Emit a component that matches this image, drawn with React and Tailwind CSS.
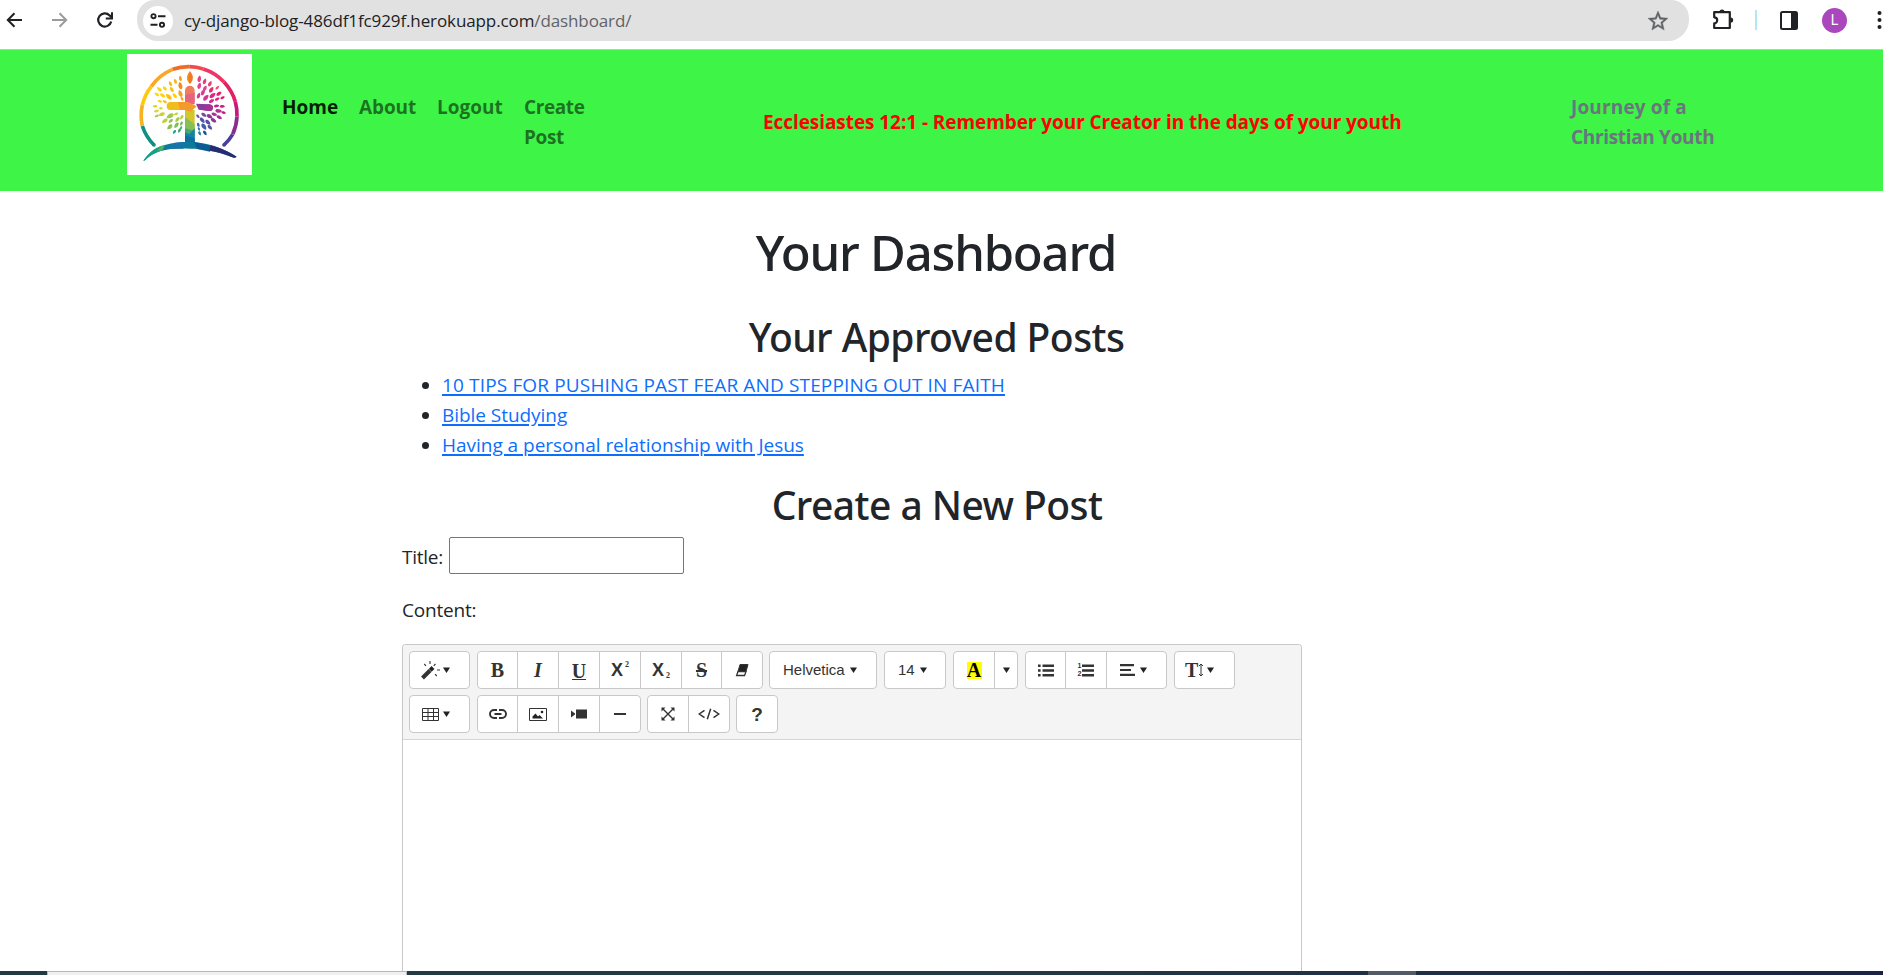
const RING = [
  ['M102 300 A145 145 0 0 1 67 243', '#0f8f86'],
  ['M67 243 A145 145 0 0 1 67 180', '#f6b424'],
  ['M67 180 A145 145 0 0 1 94 124', '#fdc90f'],
  ['M94 124 A145 145 0 0 1 158 73', '#f9a825'],
  ['M158 73 A145 145 0 0 1 208 65', '#f26a24'],
  ['M208 65 A145 145 0 0 1 250 72', '#ee4b4a'],
  ['M250 72 A145 145 0 0 1 312 111', '#ee3565'],
  ['M312 111 A145 145 0 0 1 346 170', '#e22062'],
  ['M346 170 A145 145 0 0 1 351 215', '#c9187f'],
  ['M351 215 A145 145 0 0 1 338 268', '#8a2d8f'],
  ['M338 268 A145 145 0 0 1 312 300', '#4b3f9d'],
];

// [x, y, rotation, length, color]
const LEAVES = [
  [181, 100, -10, 8, '#f59a1f'], [166, 109, -20, 8, '#f9b31c'], [151, 116, -28, 8, '#f8b81b'],
  [181, 122, -12, 11, '#f58a1f'], [155, 133, -30, 9, '#f9c21a'], [134, 130, -40, 8, '#fbd00e'],
  [118, 133, -48, 9, '#fdd60a'], [164, 152, -38, 9, '#ffd200'], [181, 145, -20, 11, '#f7a41c'],
  [186, 161, -25, 7, '#f6a821'], [146, 155, -45, 11, '#fbbf15'], [127, 151, -55, 9, '#fbcf12'],
  [110, 148, -60, 8, '#fdd80a'], [134, 170, -65, 7, '#f9c01a'], [119, 169, -72, 7, '#f7d713'],
  [105, 184, -85, 7, '#d9d72a'], [122, 190, -90, 6, '#c9d22f'], [109, 198, -105, 8, '#e0d531'],
  [125, 208, -110, 10, '#d3cf31'], [110, 213, -115, 7, '#a9c93c'], [150, 213, -120, 12, '#9ecb4a'],
  [168, 207, -115, 7, '#c7d136'], [134, 228, -125, 10, '#bfd036'], [172, 224, -140, 9, '#a5c940'],
  [152, 228, -130, 8, '#8fc449'], [185, 217, -150, 8, '#c2d03a'], [149, 246, -135, 10, '#8cc152'],
  [169, 241, -145, 10, '#7fbf58'], [184, 236, -155, 7, '#74bb60'], [163, 261, -145, 7, '#1fa07c'],
  [178, 257, -155, 7, '#2ba574'], [183, 249, -155, 6, '#45ad68'],
  [238, 101, 10, 10, '#e83e83'], [254, 109, 20, 9, '#ec3a78'], [270, 116, 28, 9, '#ef3e73'],
  [238, 122, 14, 10, '#e2418b'], [255, 130, 25, 9, '#e93d85'], [274, 134, 35, 10, '#eb2c6e'],
  [292, 128, 42, 7, '#f04c6e'], [249, 142, 25, 10, '#d93c92'], [236, 152, 20, 9, '#d13a95'],
  [258, 158, 40, 11, '#d8338f'], [278, 151, 50, 11, '#e12583'], [297, 146, 55, 9, '#e71f6a'],
  [275, 168, 60, 9, '#e0218a'], [292, 162, 62, 8, '#e0218a'], [308, 158, 65, 7, '#df1b66'],
  [290, 183, 80, 8, '#c51d8a'], [307, 184, 88, 8, '#d01f84'], [296, 198, 100, 10, '#b92d90'],
  [311, 203, 105, 7, '#c11b80'], [283, 208, 110, 9, '#a03293'], [298, 217, 120, 9, '#a82a8e'],
  [234, 214, 140, 7, '#7c51a0'], [252, 210, 125, 9, '#7a4aa0'], [269, 214, 120, 10, '#8e3997'],
  [281, 226, 125, 10, '#8b3796'], [247, 226, 140, 10, '#4c56a7'], [264, 232, 135, 10, '#6048a0'],
  [235, 240, 155, 7, '#3a69b3'], [252, 245, 145, 11, '#3c60ac'], [270, 247, 135, 9, '#4d55a5'],
  [237, 252, 155, 6, '#2f6cb3'], [239, 265, 155, 7, '#1b83a5'], [255, 264, 145, 8, '#1e4f9e'],
];

function Logo() {
  return (
    <svg className="h-[121px] w-[125px] bg-white" viewBox="21 27 375 363" fill="none">
      {RING.map(([d, c]) => (
        <path key={d} d={d} stroke={c} strokeWidth="11" />
      ))}
      <circle cx="102" cy="300" r="5.5" fill="#0f8f7d" />
      <circle cx="312" cy="300" r="5.5" fill="#4a3f98" />
      {LEAVES.map(([x, y, a, l, c]) => (
        <path
          key={x + '-' + y}
          d={`M0 ${-l} C${l * 0.8} ${-l * 0.3} ${l * 0.6} ${l * 0.9} 0 ${l} C${-l * 0.6} ${l * 0.9} ${-l * 0.8} ${-l * 0.3} 0 ${-l}Z`}
          transform={`translate(${x} ${y}) rotate(${a})`}
          fill={c}
        />
      ))}
      <path d="M210 78 C222 94 221 104 210 117 C199 104 198 94 210 78Z" fill="#ee7a22" />
      <path d="M210 78 C204 94 205 104 210 117 C199 104 198 94 210 78Z" fill="#f6961e" />
      <path d="M195 172 V137 A14.5 14.5 0 0 1 224 137 V172Z" fill="#ef7d5c" />
      <path d="M195 150 L224 143 V178 H195Z" fill="#e6647d" />
      <path d="M195 195 H224 V262 H195Z" fill="#d3c62c" />
      <path d="M195 216 L224 238 V262 H195Z" fill="#86bf58" />
      <path d="M195 250 L224 258 V300 H195Z" fill="#43a872" />
      <path d="M195 262 L208 268 L224 250 V300 H195Z" fill="#1482a2" />
      <path d="M195 272 L224 280 V300 H195Z" fill="#0d6ea3" />
      <path d="M180 171 H151 Q140 172 140 183 Q140 195 151 195 H180Z" fill="#f1bd1d" />
      <path d="M174 171 H205 L230 184 L212 200 L195 195 H180Z" fill="#f49a2c" />
      <path d="M228 176 L268 178 Q279 180 279 188 Q278 198 268 198 L236 194Z" fill="#8c3a9b" />
      <path d="M262 178 Q279 178 279 188 Q278 198 268 198 L250 196Z" fill="#a3358f" />
      <path d="M70 348 C100 302 150 290 209 291 C265 292 305 308 350 335 C345 340 340 338 335 336 C290 318 250 311 209 311 C150 308 105 315 75 346Z" fill="#0d7a9c" />
      <path d="M70 348 C85 325 100 312 122 303 L128 316 C105 322 90 332 75 346Z" fill="#16a085" />
      <path d="M120 304 L135 299 L128 316 L112 321Z" fill="#4caf6a" />
      <path d="M160 294 L195 291 L190 311 L150 311Z" fill="#1874a8" />
      <path d="M222 291 L275 302 L270 320 L232 312Z" fill="#0b5c93" />
      <path d="M272 301 C305 310 325 320 350 335 C345 340 340 338 335 336 C310 326 290 320 268 317Z" fill="#2a2a72" />
    </svg>
  );
}

function Caret() {
  return (
    <svg className="h-[6px] w-[7px] shrink-0" viewBox="0 0 7 6">
      <path d="M0 0.5h7L3.5 6z" fill="#222" />
    </svg>
  );
}

function Icon({ w = 18, h = 18, children }) {
  return (
    <svg width={w} height={h} viewBox={`0 0 ${w} ${h}`} className="shrink-0" fill="none" stroke="#333" strokeWidth="1.6">
      {children}
    </svg>
  );
}

function Group({ children }) {
  return (
    <div className="flex h-[38px] divide-x divide-[#c8c8c8] rounded-[4px] border border-[#c8c8c8] bg-white text-[#333]">
      {children}
    </div>
  );
}

function Btn({ className = 'w-[41px] justify-center', children }) {
  return <button className={'flex items-center ' + className}>{children}</button>;
}

const NARROW = 'w-[40px] justify-center';
const SERIF = "font-['Liberation_Serif',serif] text-[20px] leading-none";

function EditorToolbar() {
  return (
    <div className="h-[95px] border-b border-[#d5d5d5] bg-[#f4f4f4] pl-[6px] pt-[6px] font-['Liberation_Sans',sans-serif]">
      <div className="flex gap-[7px]">
        <Group>
          <Btn className="w-[59px] gap-[2px] pl-[11px]">
            <Icon w={20} h={20}>
              <path d="M1.5 18 L9 10.5" strokeWidth="4" />
              <path d="M9.2 10.3 L12 7.5" strokeWidth="4" stroke="#222" />
              <path d="M3.2 4l1.8 1.8M9 1v3M14.5 4l-1.8 1.8M16 10h3M14 14.2l1.8 1.8" strokeWidth="1.1" />
            </Icon>
            <Caret />
          </Btn>
        </Group>
        <Group>
          <Btn className={NARROW}><span className={SERIF + ' font-bold'}>B</span></Btn>
          <Btn><span className={SERIF + ' font-bold italic'}>I</span></Btn>
          <Btn>
            <span className={SERIF + ' h-[19px] border-b-[1.5px] border-[#333] text-[19px] font-bold'}>U</span>
          </Btn>
          <Btn>
            <span className="text-[18px] font-bold leading-none">X</span>
            <span className="-mt-[11px] ml-[2px] font-['Liberation_Serif',serif] text-[8px] font-bold leading-none">2</span>
          </Btn>
          <Btn>
            <span className="text-[18px] font-bold leading-none">X</span>
            <span className="-mb-[11px] ml-[2px] font-['Liberation_Serif',serif] text-[8px] font-bold leading-none">2</span>
          </Btn>
          <Btn className={NARROW}>
            <span className={SERIF + ' font-bold line-through decoration-2'}>S</span>
          </Btn>
          <Btn className={NARROW}>
            <Icon w={14} h={14}>
              <path d="M5 1.5h8L11 8.5H3z" fill="#222" strokeWidth="1" />
              <path d="M3 8.5h8L9.6 12.5H1.6z" fill="#fff" strokeWidth="1.3" />
            </Icon>
          </Btn>
        </Group>
        <div className="-ml-px">
          <Group>
            <Btn className="w-[106px] gap-[5px] pl-[13px] text-[15px]">
              <span>Helvetica</span>
              <Caret />
            </Btn>
          </Group>
        </div>
        <Group>
          <Btn className="w-[60px] gap-[5px] pl-[13px] text-[15px]">
            <span>14</span>
            <Caret />
          </Btn>
        </Group>
        <Group>
          <Btn>
            <span className={SERIF + ' flex h-[17px] w-[15px] items-center justify-center bg-[#ffff00] font-bold text-black'}>A</span>
          </Btn>
          <Btn className="w-[22px] justify-center"><Caret /></Btn>
        </Group>
        <Group>
          <Btn className={NARROW}>
            <Icon w={16} h={13}>
              <path d="M4.5 1.7h11.5M4.5 6.5h11.5M4.5 11.3h11.5" strokeWidth="2.4" />
              <path d="M0 1.7h2.6M0 6.5h2.6M0 11.3h2.6" strokeWidth="2.4" />
            </Icon>
          </Btn>
          <Btn>
            <span className="mr-[1px] flex flex-col text-[7px] font-bold leading-[8px]">
              <span>1</span>
              <span>2</span>
            </span>
            <Icon w={12} h={13}>
              <path d="M0 1.7h12M0 6.5h12M0 11.3h12" strokeWidth="2.4" />
            </Icon>
          </Btn>
          <Btn className="w-[59px] gap-[5px] pl-[13px]">
            <Icon w={15} h={12}>
              <path d="M0 1.1h14M0 6h11M0 10.9h15" strokeWidth="2.1" />
            </Icon>
            <Caret />
          </Btn>
        </Group>
        <Group>
          <Btn className="w-[59px] pl-[10px]">
            <span className={SERIF + ' font-bold'}>T</span>
            <Icon w={6} h={14}>
              <path d="M3 1v12M1 3l2-2 2 2M1 11l2 2 2-2" strokeWidth="1" />
            </Icon>
            <span className="ml-[3px] flex"><Caret /></span>
          </Btn>
        </Group>
      </div>
      <div className="mt-[6px] flex gap-[6px]">
        <div className="mr-px">
          <Group>
            <Btn className="w-[59px] gap-[4px] pl-[12px]">
              <Icon w={17} h={13}>
                <path d="M0.5 0.5h16v12h-16zM0.5 4.5h16M0.5 8.5h16M6 0.5v12M11.5 0.5v12" strokeWidth="1" />
              </Icon>
              <Caret />
            </Btn>
          </Group>
        </div>
        <Group>
          <Btn className={NARROW}>
            <Icon w={18} h={10}>
              <path d="M8 1H5a4 4 0 0 0 0 8h3M10 1h3a4 4 0 0 1 0 8h-3M5.5 5h7" strokeWidth="1.9" />
            </Icon>
          </Btn>
          <Btn>
            <Icon w={18} h={13}>
              <path d="M0.5 0.5h17v12h-17z" strokeWidth="1" />
              <path d="M3.5 10.5V8.5l3-3 2.5 3 1.5-1.5 3.5 3.5z" fill="#222" stroke="none" />
              <circle cx="13" cy="4" r="1.3" fill="#222" stroke="none" />
            </Icon>
          </Btn>
          <Btn>
            <Icon w={16} h={10}>
              <path d="M5 0.5h11v9H5z" fill="#333" stroke="none" />
              <path d="M0 1.5l4 3v1l-4 3z" fill="#333" stroke="none" />
            </Icon>
          </Btn>
          <Btn className={NARROW}>
            <Icon w={12} h={2}>
              <path d="M0 1h12" strokeWidth="2" />
            </Icon>
          </Btn>
        </Group>
        <Group>
          <Btn>
            <Icon w={14} h={14}>
              <path d="M2 2l10 10M12 2L2 12" strokeWidth="1.4" />
              <path d="M0.5 0.5h4l-4 4zM13.5 0.5h-4l4 4zM0.5 13.5h4l-4-4zM13.5 13.5h-4l4-4z" fill="#333" stroke="none" />
            </Icon>
          </Btn>
          <Btn className={NARROW}>
            <Icon w={22} h={12}>
              <path d="M6.5 2.3L1.2 6l5.3 3.7M15.5 2.3L20.8 6l-5.3 3.7M12.7 0.7L9.3 11.3" strokeWidth="1.5" />
            </Icon>
          </Btn>
        </Group>
        <Group>
          <Btn className={NARROW}><span className="text-[19px] font-bold leading-none">?</span></Btn>
        </Group>
      </div>
    </div>
  );
}

function BrowserBar() {
  return (
    <div className="flex h-[50px] shrink-0 border-b border-[#c6c6c6] bg-white">
      <div className="flex h-[40px] w-[137px] items-center pl-[6px]">
        <svg className="h-[16px] w-[17px]" viewBox="0 0 17 16" fill="none" stroke="#202124" strokeWidth="2">
          <path d="M16 8H2M8.5 1.3L1.8 8l6.7 6.7" />
        </svg>
        <svg className="ml-[28px] h-[16px] w-[17px]" viewBox="0 0 17 16" fill="none" stroke="#9a9b9d" strokeWidth="2">
          <path d="M1 8h14M8.5 1.3L15.2 8l-6.7 6.7" />
        </svg>
        <svg className="ml-[28px] h-[18px] w-[18px]" viewBox="0 0 18 18" fill="none" stroke="#202124" strokeWidth="2.2">
          <path d="M15.2 10.5A6.6 6.6 0 1 1 13.6 4.4L15.4 6.2" />
          <path d="M16 1.2v6.2H9.8" strokeWidth="2" />
        </svg>
      </div>
      <div className="flex h-[41px] w-[1552px] items-center rounded-b-[21px] rounded-t-[18px] bg-[#e1e1e1] pl-[6px] pr-[19px]">
        <div className="flex size-[30px] items-center justify-center rounded-full bg-white">
          <svg className="h-[15px] w-[16px]" viewBox="0 0 16 15" fill="none" stroke="#202124" strokeWidth="1.9">
            <circle cx="3.5" cy="3.2" r="2.1" />
            <path d="M8 3.2h7.5M0.5 11.8h7" />
            <circle cx="12" cy="11.8" r="2.1" />
          </svg>
        </div>
        <div className="ml-[11px] whitespace-nowrap font-['Open_Sans',sans-serif] text-[17px] leading-[24px] tracking-[-0.11px] text-[#202124]">
          cy-django-blog-486df1fc929f.herokuapp.com<span className="text-[#5f6368]">/dashboard/</span>
        </div>
        <svg className="ml-auto size-[24px]" viewBox="0 0 24 24" fill="#5f6368" stroke="#5f6368" strokeWidth="0.4">
          <path d="M22 9.24l-7.19-.62L12 2 9.19 8.63 2 9.24l5.46 4.73L5.82 21 12 17.27 18.18 21l-1.63-7.03L22 9.24zM12 15.4l-3.76 2.27 1-4.28-3.32-2.88 4.38-.38L12 6.1l1.71 4.04 4.38.38-3.32 2.88 1 4.28L12 15.4z" />
        </svg>
      </div>
      <div className="flex h-[40px] w-[194px] items-center overflow-hidden pl-[23px]">
        <svg className="h-[22px] w-[23px]" viewBox="0 0 23 22" fill="none" stroke="#202124" strokeWidth="2.2" strokeLinejoin="round">
          <path d="M2.2 3.2H17.8V19H2.2V14.3a3 3 0 0 0 0-6z" />
          <path d="M7.4 3a2.6 2.6 0 0 1 5.2 0zM18.6 8.5a2.6 2.6 0 0 1 0 5.2z" fill="#202124" stroke="none" />
        </svg>
        <div className="ml-[20px] h-[20px] w-[2px] bg-[#b3e7f3]" />
        <svg className="ml-[23px] h-[19px] w-[18px]" viewBox="0 0 18 19" fill="none">
          <rect x="1" y="1" width="16" height="17" rx="1.5" stroke="#202124" strokeWidth="2" />
          <path d="M11 1h6v17h-6z" fill="#202124" />
        </svg>
        <div className="ml-[24px] flex size-[25px] shrink-0 items-center justify-center rounded-full bg-[#ab47bc] font-['Roboto',sans-serif] text-[14px] leading-none text-white">
          L
        </div>
        <svg className="ml-[30px] h-[18px] w-[5px] shrink-0" viewBox="0 0 5 18" fill="#202124">
          <circle cx="2.5" cy="2" r="2" />
          <circle cx="2.5" cy="9" r="2" />
          <circle cx="2.5" cy="16" r="2" />
        </svg>
      </div>
    </div>
  );
}

const BOLD = 'font-bold text-[19px] leading-[30px]';

function SiteHeader() {
  return (
    <header className={'flex h-[141px] shrink-0 bg-[#3df447] pl-[127px] pt-[4px] ' + BOLD}>
      <Logo />
      <nav className="ml-[30px] mt-[38px] flex w-[332px] text-black/55">
        <a className="w-[77px] text-black/90">Home</a>
        <a className="w-[78px] tracking-[-0.1px]">About</a>
        <a className="w-[87px]">Logout</a>
        <a className="w-[70px] tracking-[-0.4px]">Create Post</a>
      </nav>
      <div className="ml-[149px] mt-[53px] w-[808px] whitespace-nowrap tracking-[-0.07px] text-[#ff0000]">
        Ecclesiastes 12:1 - Remember your Creator in the days of your youth
      </div>
      <div className="mt-[38px] whitespace-nowrap text-[#6c757d]">
        <div className="tracking-[0.15px]">Journey of a</div>
        <div className="tracking-[-0.33px]">Christian Youth</div>
      </div>
    </header>
  );
}

const H2 = "h-[48px] text-center font-['Noto_Sans',sans-serif] text-[39px] font-medium leading-[48px] tracking-[-0.55px]";
const LINK = 'text-[#0d6efd] underline decoration-[2px] underline-offset-[1.5px]';

export default function App() {
  return (
    <div className="flex h-[975px] w-[1883px] flex-col overflow-hidden bg-white font-['Open_Sans',sans-serif] text-[#212529]">
      <BrowserBar />
      <SiteHeader />
      <main className="ml-[402px] flex min-h-0 w-[1070px] flex-1 flex-col pt-[31px] text-[19px] leading-[30px]">
        <h1 className="h-[60px] shrink-0 pr-[2px] text-center font-['Noto_Sans',sans-serif] text-[49px] font-medium leading-[60px] tracking-[-1.2px]">
          Your Dashboard
        </h1>
        <h2 className={'mt-[31px] shrink-0 pr-[1px] ' + H2}>Your Approved Posts</h2>
        <ul className="mt-[9px] shrink-0 list-disc pl-[40px]">
          <li><a className={LINK + ' tracking-[0.15px]'}>10 TIPS FOR PUSHING PAST FEAR AND STEPPING OUT IN FAITH</a></li>
          <li><a className={LINK + ' tracking-[-0.05px]'}>Bible Studying</a></li>
          <li><a className={LINK + ' tracking-[-0.02px]'}>Having a personal relationship with Jesus</a></li>
        </ul>
        <h2 className={'mt-[21px] shrink-0 ' + H2}>Create a New Post</h2>
        <div className="mt-[8px] flex h-[37px] shrink-0 items-center">
          <label className="w-[47px] pt-[2px] tracking-[-0.24px]">Title:</label>
          <input className="h-[37px] w-[235px] rounded-[2px] border border-[#767676] bg-white" />
        </div>
        <label className="mt-[21px] h-[30px] shrink-0 tracking-[-0.2px]">Content:</label>
        <div className="mt-[19px] min-h-0 w-[900px] flex-1 overflow-hidden rounded-t-[4px] border border-b-0 border-[#c8c8c8] bg-white">
          <EditorToolbar />
        </div>
      </main>
      <div className="flex h-[4px] shrink-0 bg-linear-to-r from-[#243a43] from-50% to-[#1a2345]">
        <div className="ml-[47px] w-[360px] border-x border-t border-[#b8b8b8] bg-[#f0f0f0]" />
        <div className="ml-[961px] w-[48px] bg-[#515c66]" />
      </div>
    </div>
  );
}
